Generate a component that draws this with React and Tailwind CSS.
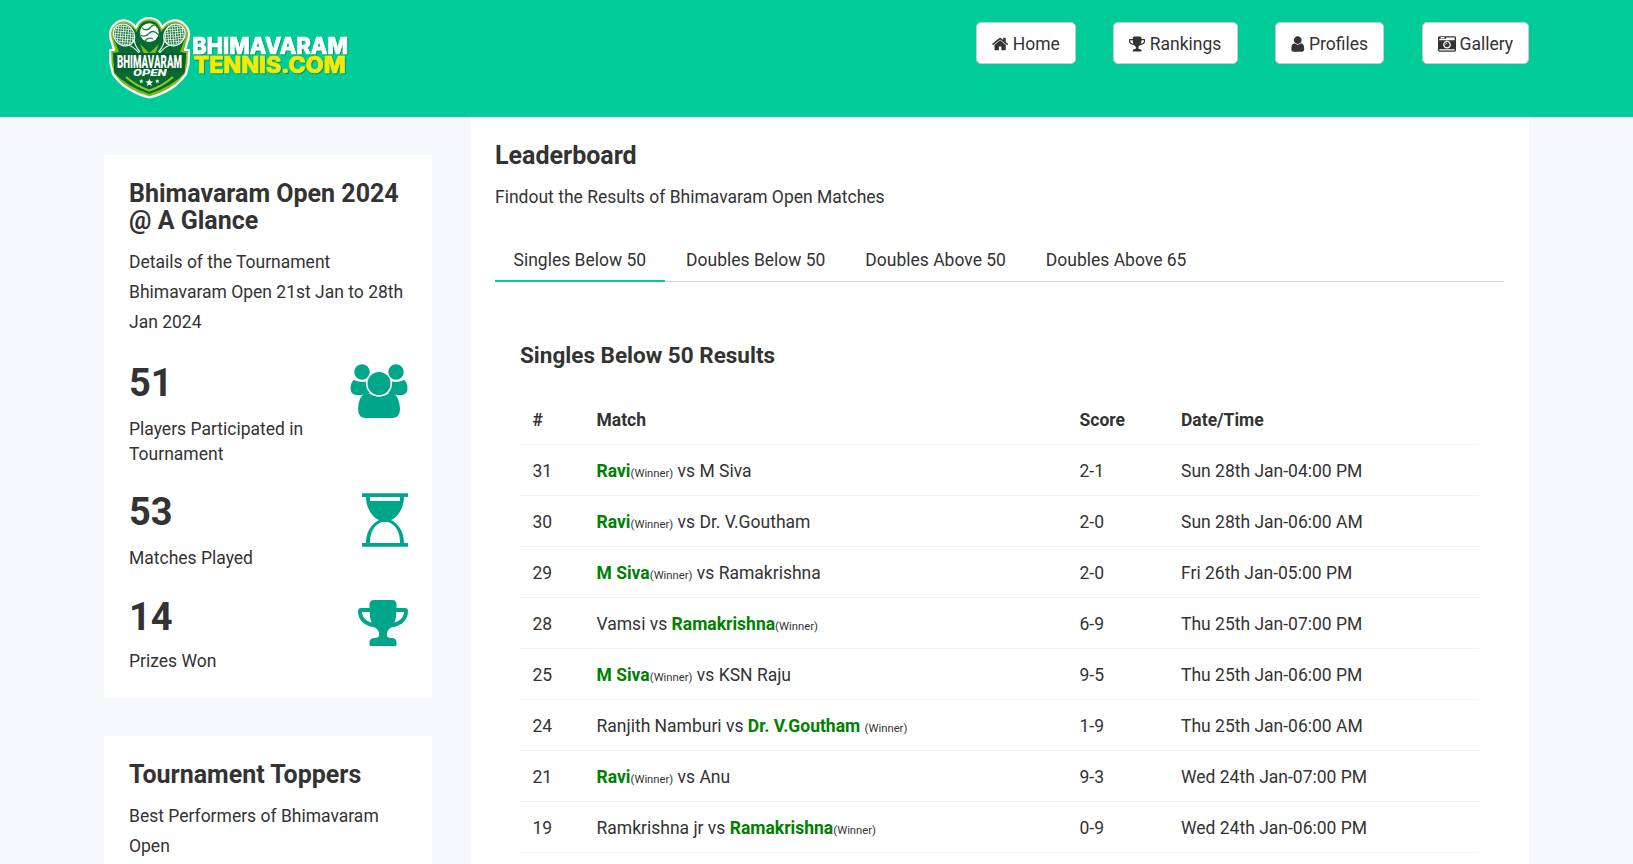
import React from "react";

const ICONS = {
  home: {
    box: "64 0 1664 1792",
    w: "w-[16.25px] -ml-[0.5px] mr-[0.5px]",
    d: "M1472 992v480q0 26-19 45t-45 19h-384v-384h-256v384h-384q-26 0-45-19t-19-45v-480q0-1 .5-3t.5-3l575-474 575 474q1 2 1 6zm223-69l-62 74q-8 9-21 11h-3q-13 0-21-7l-692-577-692 577q-12 8-24 7-13-2-21-11l-62-74q-8-10-7-23.5t11-21.5l719-599q32-26 76-26t76 26l244 204v-195q0-14 9-23t23-9h192q14 0 23 9t9 23v408l219 182q10 8 11 21.5t-7 23.5z",
  },
  trophy: {
    box: "64 0 1664 1792",
    w: "w-[16.25px] -ml-[0.5px] mr-[0.5px]",
    d: "M522 883q-74-162-74-371h-256v96q0 78 94.5 162t235.5 113zm1078-275v-96h-256q0 209-74 371 141-29 235.5-113t94.5-162zm128-128v128q0 71-41.5 143t-112 130-173 97.5-215.5 44.5q-42 54-95 95-38 34-52.5 72.5t-14.5 89.5q0 54 30.5 91t97.5 37q75 0 133.5 45.5t58.5 114.5v64q0 14-9 23t-23 9h-832q-14 0-23-9t-9-23v-64q0-69 58.5-114.5t133.5-45.5q67 0 97.5-37t30.5-91q0-51-14.5-89.5t-52.5-72.5q-53-41-95-95-113-5-215.5-44.5t-173-97.5-112-130-41.5-143v-128q0-40 28-68t68-28h288v-96q0-66 47-113t113-47h576q66 0 113 47t47 113v96h288q40 0 68 28t28 68z",
  },
  user: {
    box: "256 0 1280 1792",
    w: "w-[13.5px] -ml-[0.5px] mr-[0.5px]",
    d: "M1536 1399q0 109-62.5 187t-150.5 78h-854q-88 0-150.5-78t-62.5-187q0-85 8.5-160.5t31.5-152 58.5-131 94-89 134.5-34.5q131 128 313 128t313-128q76 0 134.5 34.5t94 89 58.5 131 31.5 152 8.5 160.5zm-256-887q0 159-112.5 271.5t-271.5 112.5-271.5-112.5-112.5-271.5 112.5-271.5 271.5-112.5 271.5 112.5 112.5 271.5z",
  },
  camera: {
    box: "0 0 1792 1792",
    w: "w-[18px] -ml-px",
    d: "M928 832q0-14-9-23t-23-9q-66 0-113 47t-47 113q0 14 9 23t23 9 23-9 9-23q0-40 28-68t68-28q14 0 23-9t9-23zm224 130q0 106-75 181t-181 75-181-75-75-181 75-181 181-75 181 75 75 181zm-1024 574h1536v-128h-1536v128zm1152-574q0-159-112.5-271.5t-271.5-112.5-271.5 112.5-112.5 271.5 112.5 271.5 271.5 112.5 271.5-112.5 112.5-271.5zm-1024-642h384v-128h-384v128zm-128 192h1536v-256h-828l-64 128h-644v128zm1664-256v1280q0 53-37.5 90.5t-90.5 37.5h-1536q-53 0-90.5-37.5t-37.5-90.5v-1280q0-53 37.5-90.5t90.5-37.5h1536q53 0 90.5 37.5t37.5 90.5z",
  },
};

const NAV = [
  { label: "Home", icon: "home", w: "w-[100px]" },
  { label: "Rankings", icon: "trophy", w: "w-[125px]" },
  { label: "Profiles", icon: "user", w: "w-[109px]" },
  { label: "Gallery", icon: "camera", w: "w-[107px] ml-px" },
];

function Racket() {
  return (
    <g>
      <path d="M19 29 Q24 29 31 37" stroke="#e8f3ea" strokeWidth="1.2" fill="none" />
      <path d="M26 22 Q26 29 32 36" stroke="#e8f3ea" strokeWidth="1.2" fill="none" />
      <ellipse cx="16" cy="19" rx="10" ry="11.5" transform="rotate(-40 16 19)" fill="#1f7a45" stroke="#f1f7f2" strokeWidth="1.3" />
      <ellipse cx="16" cy="19" rx="9.4" ry="10.9" transform="rotate(-40 16 19)" fill="url(#strings)" />
    </g>
  );
}

function Logo() {
  return (
    <svg width="244" height="86" viewBox="0 0 244 86" className="block">
      <defs>
        <pattern id="strings" width="2.5" height="2.5" patternUnits="userSpaceOnUse" patternTransform="rotate(45)">
          <path d="M0 1.25H2.5M1.25 0V2.5" stroke="#dcebdf" strokeWidth="0.8" />
        </pattern>
      </defs>
      <path
        d="M28 11.500 C30 5 36 2 41 2 C47 2 52 5 54 11.500 C60 3.500 70 2 76 8 C82 13 82 20 79 27 L77 34 L81 34 L80.500 48 L78 58 Q73 65 68 69 Q56 78 41.300 81.500 Q27 78 15 69 Q10 65 5 58 L2.500 48 L2 34 L6 34 L4 27 C1 20 1 13 7 8 C13 2 22 3.500 28 11.500 Z"
        fill="#7fbb1c"
        stroke="#ffffff"
        strokeWidth="2.2"
        strokeLinejoin="round"
      />
      <path
        d="M29 16 C31 8 35 5 41 5 C47 5 51 8 53 16 C60 7 69 5 74 10 C79 15 78 21 75 28 L72 36 L78 37 L76.500 57 Q65 70 41.300 78 Q18 70 6.500 57 L5 37 L11 36 L8 28 C4 21 4 15 9 10 C14 5 22 7 29 16 Z"
        fill="#066b33"
      />
      <path d="M18 61 Q28 70 41.300 74.500 Q55 70 65 61" fill="none" stroke="#8bc71f" strokeWidth="2.2" />
      <path d="M31 62 Q35 71 41.300 73 Q48 71 52 62 Z" fill="#066b33" />
      <Racket />
      <g transform="translate(82.500 0) scale(-1 1)">
        <Racket />
      </g>
      <path d="M32 28 L41.300 37 L51 28 L47 38 H36 Z" fill="#7fbb1c" />
      <circle cx="41.300" cy="16.700" r="9.400" fill="#ffffff" />
      <path d="M34 12 Q39 16 43 11 T49.500 12 M32.500 19 Q37 22 41 17.500 T50 18.500 M37 25 Q40 20.500 45 23" fill="none" stroke="#1b7d45" strokeWidth="1.300" />
      <path d="M5 37 H78 L76.500 56 Q41 52 6.500 56 Z" fill="#055f2e" />
      <text x="9" y="52" textLength="65" lengthAdjust="spacingAndGlyphs" className="font-['Roboto',sans-serif] text-[19px] font-black" fill="#ffffff">
        BHIMAVARAM
      </text>
      <text x="25" y="60.400" textLength="33.500" lengthAdjust="spacingAndGlyphs" className="font-['Roboto',sans-serif] text-[9.5px] font-black italic" fill="#ffffff">
        OPEN
      </text>
      <g fill="#ffffff">
        <path d="M41.300 62.500 L42.300 65.300 L45.300 65.400 L43 67.300 L43.800 70.100 L41.300 68.500 L38.800 70.100 L39.600 67.300 L37.300 65.400 L40.300 65.300 Z" />
        <path d="M33.300 63 L34 64.500 L35.600 64.600 L34.300 65.600 L34.800 67.200 L33.300 66.300 L31.800 67.200 L32.300 65.600 L31 64.600 L32.600 64.500 Z" />
        <path d="M49.300 63 L50 64.500 L51.600 64.600 L50.300 65.600 L50.800 67.200 L49.300 66.300 L47.800 67.200 L48.300 65.600 L47 64.600 L48.600 64.500 Z" />
      </g>
      <g className="font-['Inter','Open_Sans',sans-serif] font-extrabold drop-shadow-[1px_1px_0px_rgba(10,110,80,0.55)]" strokeWidth="0.7">
        <text x="84.200" y="38.200" textLength="156" lengthAdjust="spacingAndGlyphs" className="text-[23.5px]" fill="#ffffff" stroke="#ffffff">BHIMAVARAM</text>
        <text x="85.700" y="56.800" textLength="152" lengthAdjust="spacingAndGlyphs" className="text-[22.500px]" fill="#f6ea00" stroke="#f6ea00">TENNIS.COM</text>
      </g>
    </svg>
  );
}

function PeopleIcon() {
  return (
    <svg width="58" height="54" viewBox="0 0 58 54" fill="#00a68a">
      <circle cx="12" cy="8" r="7.7" />
      <circle cx="46" cy="8" r="7.7" />
      <path d="M4 16 Q12 19.500 17 17 Q16 24 20 29 Q16 31 6 31 Q0.500 30 0.500 25 Q0.500 18 4 16 Z" />
      <path d="M54 16 Q46 19.500 41 17 Q42 24 38 29 Q42 31 52 31 Q57.500 30 57.500 25 Q57.500 18 54 16 Z" />
      <path d="M18 29 Q29 36 40 29 Q49 29 50 45 Q50 54 42 54 H16 Q8 54 8 45 Q9 29 18 29 Z" />
      <circle cx="29" cy="19.500" r="12.300" stroke="#ffffff" strokeWidth="1.600" />
    </svg>
  );
}

function HourglassIcon() {
  return (
    <svg width="46" height="54" viewBox="0 0 46 54">
      <path d="M0 0.300H46V4H42C42 15 36 24 29 27C37 31 42 39 42 50H46V53.700H0V50H4C4 39 9 31 17 27C10 24 4 15 4 4H0Z" fill="#00a68a" />
      <path d="M8 4H38V8H8ZM8 50C8 39 12 32 20 29H26C34 32 38 39 38 50Z" fill="#ffffff" />
    </svg>
  );
}

function CupIcon() {
  return (
    <svg width="50" height="46" viewBox="0 0 50 46" fill="#00a68a" className="mt-[2px]">
      <path
        fillRule="evenodd"
        d="M16 0H34Q38 0 38.500 4V8H47Q50 8 50 11C50 20 44 26 33 27.500C30 29.500 28.800 32 28.800 34.500C28.800 37 30.500 38 33 38C37 38 38.500 40 38.500 42.500V45Q38.500 46 37.500 46H12.500Q11.500 46 11.500 45V42.500C11.500 40 13 38 17 38C19.500 38 21.200 37 21.200 34.500C21.200 32 20 29.500 17 27.500C6 26 0 20 0 11Q0 8 3 8H11.500V4Q12 0 16 0ZM4 12C4 17 8 21 13.500 22.500C12.200 19 11.700 16 11.700 12ZM46 12C46 17 42 21 36.500 22.500C37.800 19 38.300 16 38.300 12Z"
      />
    </svg>
  );
}

function Stat({ value, label, icon, gap, labelGap }) {
  return (
    <div className={`flex justify-between ${gap}`}>
      <div className="w-[180px]">
        <div className="text-[38px] leading-[39px] font-bold">{value}</div>
        <div className={`leading-[25px] ${labelGap}`}>{label}</div>
      </div>
      <div>{icon}</div>
    </div>
  );
}

const TABS = ["Singles Below 50", "Doubles Below 50", "Doubles Above 50", "Doubles Above 65"];

const MATCHES = [
  { id: 31, a: "Ravi", b: "M Siva", won: "a", score: "2-1", time: "Sun 28th Jan-04:00 PM" },
  { id: 30, a: "Ravi", b: "Dr. V.Goutham", won: "a", score: "2-0", time: "Sun 28th Jan-06:00 AM" },
  { id: 29, a: "M Siva", b: "Ramakrishna", won: "a", score: "2-0", time: "Fri 26th Jan-05:00 PM" },
  { id: 28, a: "Vamsi", b: "Ramakrishna", won: "b", score: "6-9", time: "Thu 25th Jan-07:00 PM" },
  { id: 25, a: "M Siva", b: "KSN Raju", won: "a", score: "9-5", time: "Thu 25th Jan-06:00 PM" },
  { id: 24, a: "Ranjith Namburi", b: "Dr. V.Goutham ", won: "b", score: "1-9", time: "Thu 25th Jan-06:00 AM" },
  { id: 21, a: "Ravi", b: "Anu", won: "a", score: "9-3", time: "Wed 24th Jan-07:00 PM" },
  { id: 19, a: "Ramkrishna jr", b: "Ramakrishna", won: "b", score: "0-9", time: "Wed 24th Jan-06:00 PM" },
];

function Player({ name, winner }) {
  if (!winner) return <>{name}</>;
  return (
    <>
      <b className="font-bold whitespace-pre text-[#008000]">{name}</b>
      <span className="text-[11.25px]">(Winner)</span>
    </>
  );
}

const ROW = "grid h-[51px] grid-cols-[64px_483px_101.5px_1fr] items-center border-b border-[#f2f2f2] pt-[2px] pl-[12.5px]";

export default function App() {
  return (
    <div className="h-[864px] overflow-hidden bg-[#f6f8fc] font-['Roboto',sans-serif] text-[17.5px] font-normal text-[#333333]">
      <header className="h-[117px] bg-[#00cc99]">
        <div className="mx-auto flex w-[1425px] justify-between">
          <div className="pt-[16px] pl-[4px]">
            <Logo />
          </div>
          <nav className="flex gap-[37px] pt-[22px]">
            {NAV.map((n) => (
              <a key={n.label} className={`flex h-[42px] items-center gap-[4px] rounded-[5px] border border-[#cccccc] bg-white pl-[15.5px] ${n.w}`}>
                <svg viewBox={ICONS[n.icon].box} className={`mt-px h-[18px] shrink-0 ${ICONS[n.icon].w}`} fill="currentColor">
                  <path d={ICONS[n.icon].d} />
                </svg>
                <span className="pt-[2px]">{n.label}</span>
              </a>
            ))}
          </nav>
        </div>
      </header>

      <div className="mx-auto flex w-[1425px] justify-between">
        <aside className="w-[328px] pt-[38px]">
          <section className="h-[543px] bg-white pt-[25px] pr-[24px] pl-[25px]">
            <h2 className="text-[25px] leading-[27px] font-bold">Bhimavaram Open 2024 @ A Glance</h2>
            <p className="mt-[13px] leading-[30px]">Details of the Tournament Bhimavaram Open 21st Jan to 28th Jan 2024</p>
            <Stat gap="mt-[27px]" labelGap="mt-[14px]" value="51" label="Players Participated in Tournament" icon={<PeopleIcon />} />
            <Stat gap="mt-[26px]" labelGap="mt-[14px]" value="53" label="Matches Played" icon={<HourglassIcon />} />
            <Stat gap="mt-[27px]" labelGap="mt-[12px]" value="14" label="Prizes Won" icon={<CupIcon />} />
          </section>
          <section className="mt-[38px] h-[200px] bg-white px-[25px] pt-[25px]">
            <h2 className="text-[25px] leading-[27px] font-bold">Tournament Toppers</h2>
            <p className="mt-[13px] leading-[30px]">Best Performers of Bhimavaram Open</p>
          </section>
        </aside>

        <main className="h-[747px] w-[1059px] overflow-hidden bg-white px-[25px] pt-[25px]">
          <h2 className="text-[25px] leading-[27px] font-bold">Leaderboard</h2>
          <p className="mt-[13px] leading-[30px]">Findout the Results of Bhimavaram Open Matches</p>
          <div className="mt-[26px] flex h-[44px] gap-[2.9px] shadow-[inset_0_-1px_0_#d8d8d8]">
            {TABS.map((t, i) => (
              <div key={t} className={`flex h-[44px] items-center px-[18.5px] pt-[2px] ${i === 0 ? "border-b-2 border-[#00cc99]" : "border-b-2 border-transparent"}`}>
                {t}
              </div>
            ))}
          </div>
          <div className="px-[25px] pt-[61px]">
            <h3 className="text-[22.5px] leading-[25px] font-bold">Singles Below 50 Results</h3>
            <div className="mt-[26px]">
              <div className={`${ROW} font-bold`}>
                <span>#</span>
                <span>Match</span>
                <span>Score</span>
                <span>Date/Time</span>
              </div>
              {MATCHES.map((m) => (
                <div key={m.id} className={ROW}>
                  <span>{m.id}</span>
                  <span>
                    <Player name={m.a} winner={m.won === "a"} /> vs <Player name={m.b} winner={m.won === "b"} />
                  </span>
                  <span>{m.score}</span>
                  <span>{m.time}</span>
                </div>
              ))}
            </div>
          </div>
        </main>
      </div>
    </div>
  );
}
